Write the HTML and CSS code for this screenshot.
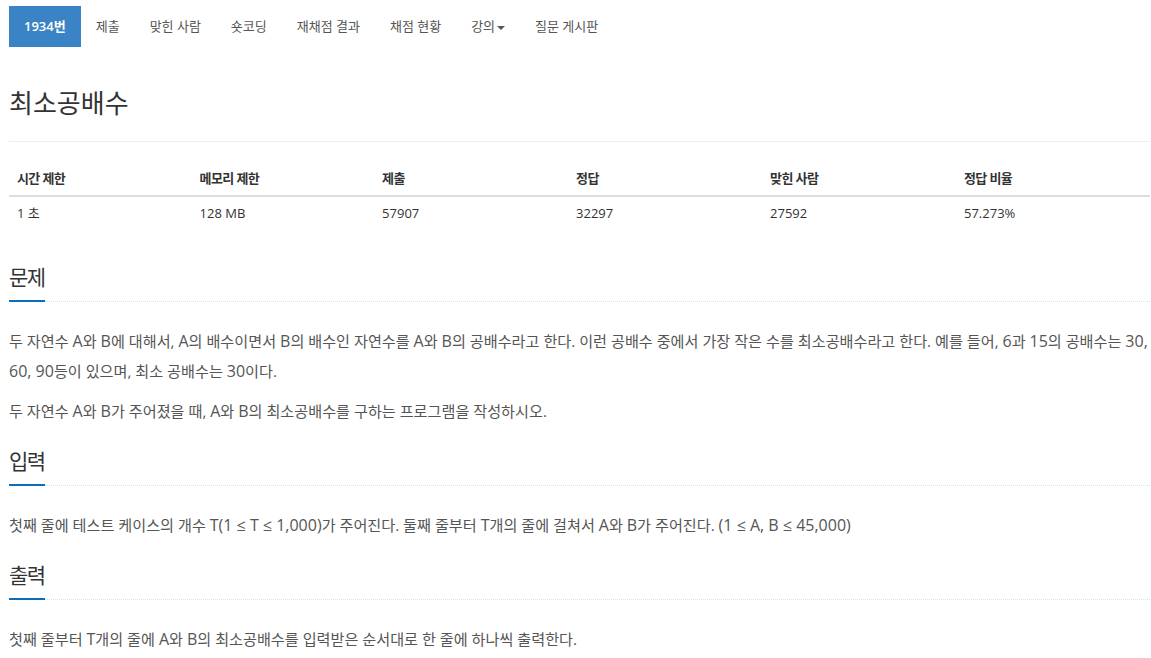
FILE: index.html
```html
<!DOCTYPE html>
<html lang="ko">
<head>
<meta charset="utf-8">
<title>최소공배수</title>
<link rel="stylesheet" href="styles.css">
</head>
<body>
<div class="page">
  <ul class="tabs">
    <li class="tab active">1934번</li>
    <li class="tab">제출</li>
    <li class="tab">맞힌 사람</li>
    <li class="tab">숏코딩</li>
    <li class="tab">재채점 결과</li>
    <li class="tab">채점 현황</li>
    <li class="tab">강의<span class="caret"></span></li>
    <li class="tab">질문 게시판</li>
  </ul>

  <div class="page-header">
    <h1 class="title">최소공배수</h1>
  </div>

  <table class="info">
    <thead>
      <tr>
        <th class="c1">시간 제한</th>
        <th class="c2">메모리 제한</th>
        <th class="c3">제출</th>
        <th class="c4">정답</th>
        <th class="c5">맞힌 사람</th>
        <th class="c6">정답 비율</th>
      </tr>
    </thead>
    <tbody>
      <tr>
        <td>1 초 </td>
        <td>128 MB</td>
        <td>57907</td>
        <td>32297</td>
        <td>27592</td>
        <td>57.273%</td>
      </tr>
    </tbody>
  </table>

  <section class="section">
    <div class="headline"><h2><span>문제</span></h2></div>
    <div class="text">
      <p>두 자연수 <span class="en">A</span>와 <span class="en">B</span>에 대해서, <span class="en">A</span>의 배수이면서 <span class="en">B</span>의 배수인 자연수를 <span class="en">A</span>와 <span class="en">B</span>의 공배수라고 한다. 이런 공배수 중에서 가장 작은 수를 최소공배수라고 한다. 예를 들어, <span class="en">6</span>과 <span class="en">15</span>의 공배수는 <span class="en">30, 60, 90</span>등이 있으며, 최소 공배수는 <span class="en">30</span>이다.</p>
      <p>두 자연수 <span class="en">A</span>와 <span class="en">B</span>가 주어졌을 때, <span class="en">A</span>와 <span class="en">B</span>의 최소공배수를 구하는 프로그램을 작성하시오.</p>
    </div>
  </section>

  <section class="section">
    <div class="headline"><h2><span>입력</span></h2></div>
    <div class="text">
      <p>첫째 줄에 테스트 케이스의 개수 <span class="en">T(1 ≤ T ≤ 1,000)</span>가 주어진다. 둘째 줄부터 <span class="en">T</span>개의 줄에 걸쳐서 <span class="en">A</span>와 <span class="en">B</span>가 주어진다. <span class="en">(1 ≤ A, B ≤ 45,000)</span></p>
    </div>
  </section>

  <section class="section">
    <div class="headline"><h2><span>출력</span></h2></div>
    <div class="text">
      <p>첫째 줄부터 <span class="en">T</span>개의 줄에 <span class="en">A</span>와 <span class="en">B</span>의 최소공배수를 입력받은 순서대로 한 줄에 하나씩 출력한다.</p>
    </div>
  </section>
</div>
</body>
</html>
```

FILE: styles.css
```css
html, body {
  margin: 0;
  padding: 0;
  background: #fff;
}
body {
  font-family: "Open Sans", "Noto Sans CJK KR", sans-serif;
  color: #555;
  font-size: 13px;
}
.page {
  padding: 6px 1px 0 9px;
}
.tabs {
  list-style: none;
  margin: 0;
  padding: 0;
  display: flex;
  height: 41px;
}
.tab {
  padding: 0 15px;
  line-height: 41px;
  font-size: 13px;
  color: #555;
}
.tab.active {
  background: #3a83c4;
  color: #fff;
  font-weight: 600;
}
.caret {
  display: inline-block;
  width: 0;
  height: 0;
  margin-left: 2px;
  vertical-align: middle;
  border-top: 4px solid #555;
  border-left: 4px solid transparent;
  border-right: 4px solid transparent;
}
.page-header {
  margin-top: 38px;
  padding-bottom: 20px;
  border-bottom: 1px solid #eee;
}
.title {
  margin: 0;
  font-size: 26px;
  font-weight: 400;
  line-height: 36px;
  color: #333;
}
.info {
  width: 100%;
  border-collapse: collapse;
  margin-top: 19px;
  margin-bottom: 31px;
  font-size: 13px;
  color: #333;
}
.info th, .info td {
  text-align: left;
  padding: 8px;
  line-height: 18px;
}
.info td {
  padding-top: 7px;
}
.info th {
  font-weight: 700;
  letter-spacing: -0.6px;
  border-bottom: 2px solid #ddd;
}
.c1 { width: 16%; }
.c2 { width: 16%; }
.c3 { width: 17%; }
.c4 { width: 17%; }
.c5 { width: 17%; }
.c6 { width: 17%; }
.section {
  margin-top: 19px;
}
.headline {
  border-bottom: 1px dotted #d4e3f0;
}
.headline h2 {
  margin: 0;
  font-size: 21px;
  font-weight: 400;
  line-height: 32px;
  letter-spacing: -1.5px;
  color: #333;
}
.headline h2 span {
  display: inline-block;
  border-bottom: 2px solid #0a6ebd;
  margin-bottom: -1px;
  padding-bottom: 7px;
}
.text {
  padding-top: 24px;
  font-size: 15.15px;
  line-height: 30px;
  color: #555;
}
.text .en {
  font-size: 16px;
}
.text p {
  margin: 0 0 10px;
}
```
